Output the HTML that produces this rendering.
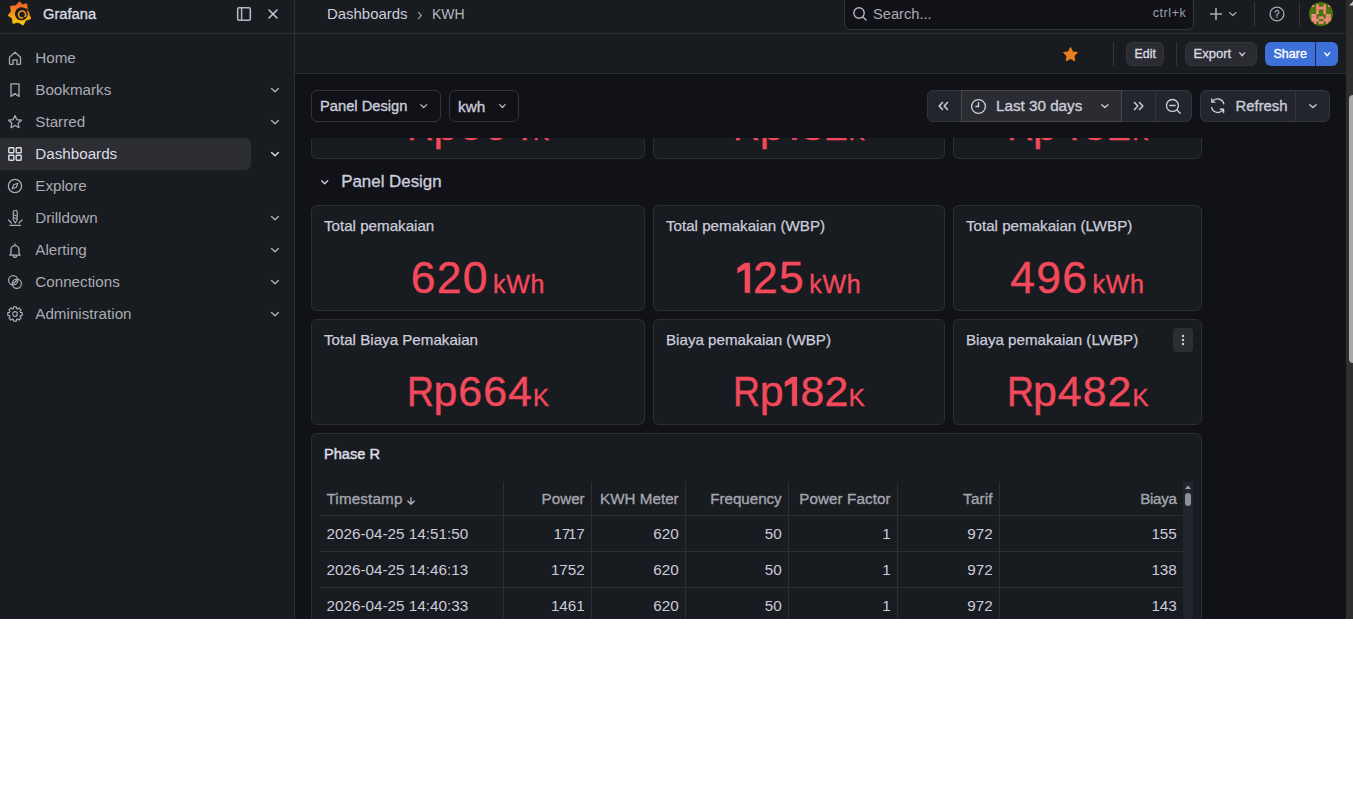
<!DOCTYPE html>
<html><head><meta charset="utf-8">
<style>
*{box-sizing:border-box;margin:0;padding:0}
html,body{width:1353px;height:788px;background:#fff;overflow:hidden;font-family:"Liberation Sans",sans-serif}
#app{position:absolute;left:0;top:0;width:1353px;height:619px;background:#111217;overflow:hidden}
.abs{position:absolute}
.t{position:absolute;white-space:nowrap;line-height:1}
.med{-webkit-text-stroke:0.35px currentColor}
#side{position:absolute;left:0;top:0;width:295px;height:619px;background:#181b1f;border-right:1px solid #2c2e34;z-index:3}
#sidehead{position:absolute;left:0;top:0;width:294px;height:34px;border-bottom:1px solid #2c2e34}
.nav{position:absolute;left:0;width:294px;height:32px;color:#a9abb6;font-size:15.2px}
.nav.active{color:#dcdde6}
.nav .bg{position:absolute;left:0;top:0;width:251px;height:32px;background:#2c2e34;border-radius:0 6px 6px 0}
.nav svg.ic{position:absolute;left:7px;top:8px;width:16px;height:16px}
.nav .lbl{position:absolute;left:35.3px;top:7.9px;line-height:1;white-space:nowrap}
.nav svg.chev{position:absolute;left:269px;top:11px;width:12px;height:10px}
#top{position:absolute;left:295px;top:0;width:1051px;height:34px;background:#181b1f;border-bottom:1px solid #2c2e34;z-index:2}
#tool{position:absolute;left:295px;top:34px;width:1051px;height:40px;background:#181b1f;border-bottom:1px solid #2c2e34;z-index:2}
#canvas{position:absolute;left:0;top:0;width:1353px;height:619px}
#varbar{position:absolute;left:295px;top:74px;width:1051px;height:64px;background:#111217}
#vsb{position:absolute;left:1346px;top:0;width:7px;height:619px;background:#2e2e2e;z-index:5;overflow:hidden}
.btn{background:#2a2c31;border:1px solid #34363c;border-radius:6px}
.sel{background:#111217;border:1px solid #34363c;border-radius:6px}
.grp{background:#22252b;border:1px solid #34363c;border-radius:6px}
.panel{position:absolute;background:#181b1f;border:1px solid #2c2e34;border-radius:6px;overflow:hidden}
.ptitle{position:absolute;left:12px;top:12px;font-size:15.15px;color:#ccccdc;line-height:1;white-space:nowrap;-webkit-text-stroke:0.25px currentColor}
.val{position:absolute;left:0;width:100%;text-align:center;color:#f2495c;white-space:nowrap;line-height:1;-webkit-text-stroke:.4px #f2495c}
.hd{color:#a3a5af}
.cell{font-size:15.28px;color:#ccccdc}

</style></head><body>

<div id="app">
 <div id="side">
  <div id="sidehead">
   <svg class="abs" style="left:4px;top:0px" width="30" height="28" viewBox="0 0 30 28">
    <defs><linearGradient id="lg" x1="0" y1="0" x2="0" y2="1"><stop offset="0" stop-color="#f0582a"/><stop offset="1" stop-color="#fcd10a"/></linearGradient></defs>
    <path fill="url(#lg)" stroke="url(#lg)" stroke-width="0.6" stroke-linejoin="round" d="M25.20 13.60 25.19 13.92 25.18 14.25 25.15 14.57 25.30 14.92 25.48 15.29 25.68 15.68 25.89 16.09 26.09 16.52 26.28 16.97 26.46 17.44 26.64 17.94 26.79 18.45 26.62 18.83 26.12 19.04 25.63 19.22 25.15 19.38 24.68 19.53 24.23 19.65 23.78 19.76 23.35 19.86 22.95 19.95 22.59 20.06 22.36 20.29 22.12 20.51 21.88 20.72 21.63 20.93 21.37 21.12 21.15 21.38 20.99 21.75 20.83 22.14 20.66 22.56 20.48 22.99 20.27 23.42 20.05 23.87 19.80 24.32 19.53 24.78 19.24 25.23 18.74 25.00 18.27 24.76 17.82 24.51 17.40 24.25 16.99 23.99 16.61 23.72 16.24 23.46 15.90 23.21 15.57 22.98 15.25 22.88 14.93 22.85 14.61 22.81 14.29 22.76 13.97 22.70 13.65 22.62 13.34 22.54 13.00 22.52 12.61 22.63 12.20 22.75 11.77 22.87 11.32 22.99 10.85 23.09 10.36 23.19 9.85 23.27 9.33 23.34 8.79 23.39 8.67 22.86 8.57 22.34 8.49 21.83 8.43 21.34 8.39 20.85 8.36 20.39 8.34 19.94 8.33 19.51 8.31 19.11 8.19 18.80 8.01 18.53 7.85 18.25 7.69 17.97 7.37 17.76 7.01 17.56 6.63 17.35 6.23 17.12 5.82 16.87 5.41 16.61 4.99 16.32 4.57 16.01 4.16 15.67 4.09 15.26 4.39 14.81 4.69 14.38 4.99 13.98 5.30 13.60 5.61 13.24 5.92 12.90 6.22 12.58 6.50 12.28 6.74 11.99 6.80 11.67 6.88 11.35 6.96 11.04 7.06 10.73 7.08 10.39 6.99 10.00 6.89 9.59 6.78 9.15 6.68 8.70 6.59 8.22 6.51 7.73 6.44 7.22 6.39 6.69 6.37 6.15 6.90 6.05 7.42 5.97 7.93 5.91 8.43 5.86 8.91 5.84 9.38 5.83 9.83 5.83 10.25 5.83 10.65 5.82 10.97 5.71 11.25 5.55 11.53 5.39 11.82 5.24 12.12 5.10 12.42 4.98 12.69 4.78 12.93 4.46 13.18 4.12 13.45 3.76 13.73 3.39 14.03 3.01 14.36 2.63 14.71 2.25 15.08 1.88 15.48 1.51 15.90 1.85 16.30 2.20 16.67 2.55 17.02 2.91 17.35 3.26 17.66 3.61 17.95 3.95 18.22 4.28 18.49 4.58 18.83 4.58 19.23 4.46 19.65 4.33 20.09 4.20 20.55 4.08 21.02 3.96 21.52 3.87 22.04 3.78 22.57 3.71 22.91 3.95 23.03 4.48 23.13 4.99 23.20 5.49 23.26 5.98 23.30 6.45 23.33 6.91 23.35 7.34 23.38 7.76 23.42 8.13 23.61 8.40 23.79 8.67 23.95 8.95 24.11 9.23 24.26 9.52 24.40 9.82 24.52 10.12 24.64 10.42 24.74 10.73 24.84 11.04 24.92 11.35 25.00 11.67 25.06 11.99 25.11 12.31 25.15 12.63 25.18 12.95 25.19 13.28z"/>
    <circle cx="17.4" cy="13.8" r="6.5" fill="#181b1f"/>
    <path d="M21.5 8.6Q25 9.6 26.2 12.6" fill="none" stroke="#181b1f" stroke-width="1.5"/>
    <circle cx="18.1" cy="14.6" r="3.6" fill="none" stroke="#f7921c" stroke-width="1.7"/>
    <path d="M18.6 18.3 21.4 17.3" stroke="#181b1f" stroke-width="1.3"/>
   </svg>
   <span class="t med" style="left:43px;top:6.8px;font-size:14.7px;color:#d8d9e3" id="gtext">Grafana</span>
   <svg class="abs" style="left:236px;top:6px" width="16" height="16" viewBox="0 0 16 16"><rect x="1.7" y="1.7" width="12.6" height="12.6" rx="1.2" fill="none" stroke="#b4b6c0" stroke-width="1.6"/><path d="M5.6 1.7v12.6" stroke="#b4b6c0" stroke-width="1.5"/></svg>
   <svg class="abs" style="left:267px;top:8px" width="12" height="12" viewBox="0 0 12 12"><path d="M2 2l8 8M10 2l-8 8" stroke="#ccccdc" stroke-width="1.5" stroke-linecap="round"/></svg>
  </div>
  <div class="nav" style="top:42px"><svg class="ic" viewBox="0 0 16 16"><path d="M2.5 7.2 8 2.3l5.5 4.9v6.2a1 1 0 0 1-1 1H10V9.8H6v4.6H3.5a1 1 0 0 1-1-1z" fill="none" stroke="currentColor" stroke-width="1.3" stroke-linejoin="round"/></svg><span class="lbl">Home</span></div>
<div class="nav" style="top:74px"><svg class="ic" viewBox="0 0 16 16"><path d="M4 1.8h8v12.6L8 11.6l-4 2.8z" fill="none" stroke="currentColor" stroke-width="1.3" stroke-linejoin="round"/></svg><span class="lbl">Bookmarks</span><svg class="chev" viewBox="0 0 12 10"><path d="M2.6 3.4 6 6.8l3.4-3.4" fill="none" stroke="currentColor" stroke-width="1.4" stroke-linecap="round" stroke-linejoin="round"/></svg></div>
<div class="nav" style="top:106px"><svg class="ic" viewBox="0 0 16 16"><path d="M8 1.6l1.95 4.1 4.45.55-3.3 3.05.87 4.4L8 11.5l-3.97 2.2.87-4.4L1.6 6.25l4.45-.55z" fill="none" stroke="currentColor" stroke-width="1.3" stroke-linejoin="round"/></svg><span class="lbl">Starred</span><svg class="chev" viewBox="0 0 12 10"><path d="M2.6 3.4 6 6.8l3.4-3.4" fill="none" stroke="currentColor" stroke-width="1.4" stroke-linecap="round" stroke-linejoin="round"/></svg></div>
<div class="nav active" style="top:138px"><div class="bg"></div><svg class="ic" viewBox="0 0 16 16"><rect x="1.8" y="1.8" width="5" height="5" rx=".6" fill="none" stroke="currentColor" stroke-width="1.4"/><rect x="9.2" y="1.8" width="5" height="5" rx=".6" fill="none" stroke="currentColor" stroke-width="1.4"/><rect x="1.8" y="9.2" width="5" height="5" rx=".6" fill="none" stroke="currentColor" stroke-width="1.4"/><rect x="9.2" y="9.2" width="5" height="5" rx=".6" fill="none" stroke="currentColor" stroke-width="1.4"/></svg><span class="lbl">Dashboards</span><svg class="chev" viewBox="0 0 12 10"><path d="M2.6 3.4 6 6.8l3.4-3.4" fill="none" stroke="currentColor" stroke-width="1.4" stroke-linecap="round" stroke-linejoin="round"/></svg></div>
<div class="nav" style="top:170px"><svg class="ic" viewBox="0 0 16 16"><circle cx="8" cy="8" r="6.6" fill="none" stroke="currentColor" stroke-width="1.3"/><path d="M10.8 5.2 9.3 9.3 5.2 10.8 6.7 6.7z" fill="none" stroke="currentColor" stroke-width="1.2" stroke-linejoin="round"/></svg><span class="lbl">Explore</span></div>
<div class="nav" style="top:202px"><svg class="ic" viewBox="0 0 16 16"><path d="M6.3 2.2a1.95 1.95 0 0 1 3.9 0v7.6L8.25 13 6.3 9.8z" fill="none" stroke="currentColor" stroke-width="1.2" stroke-linejoin="round"/><path d="M6.4 4.6l3.7 1.6M6.4 7.4l3.7 1.6" stroke="currentColor" stroke-width="1.1"/><path d="M1.5 10l3 3M15 10l-3 3M3 15.4h10.5" fill="none" stroke="currentColor" stroke-width="1.2" stroke-linecap="round"/></svg><span class="lbl">Drilldown</span><svg class="chev" viewBox="0 0 12 10"><path d="M2.6 3.4 6 6.8l3.4-3.4" fill="none" stroke="currentColor" stroke-width="1.4" stroke-linecap="round" stroke-linejoin="round"/></svg></div>
<div class="nav" style="top:234px"><svg class="ic" viewBox="0 0 16 16"><path d="M8 1.8v1.2M4 11.8V7.6a4 4 0 0 1 8 0v4.2l1.2 1.3H2.8zM6.3 14.2a1.8 1.8 0 0 0 3.4 0" fill="none" stroke="currentColor" stroke-width="1.3" stroke-linejoin="round" stroke-linecap="round"/></svg><span class="lbl">Alerting</span><svg class="chev" viewBox="0 0 12 10"><path d="M2.6 3.4 6 6.8l3.4-3.4" fill="none" stroke="currentColor" stroke-width="1.4" stroke-linecap="round" stroke-linejoin="round"/></svg></div>
<div class="nav" style="top:266px"><svg class="ic" viewBox="0 0 16 16"><circle cx="6.2" cy="6.2" r="4.6" fill="none" stroke="currentColor" stroke-width="1.2"/><circle cx="9.8" cy="9.8" r="4.6" fill="none" stroke="currentColor" stroke-width="1.2"/><path d="M6.5 9.5l3-3M5.6 8.2l1.2 1.2M9.2 5.6l1.2 1.2" fill="none" stroke="currentColor" stroke-width="1.1"/></svg><span class="lbl">Connections</span><svg class="chev" viewBox="0 0 12 10"><path d="M2.6 3.4 6 6.8l3.4-3.4" fill="none" stroke="currentColor" stroke-width="1.4" stroke-linecap="round" stroke-linejoin="round"/></svg></div>
<div class="nav" style="top:298px"><svg class="ic" viewBox="0 0 16 16"><path d="M6.36 2.64 6.61 0.83 9.39 0.83 9.64 2.64 10.63 3.06 12.08 1.95 14.05 3.92 12.94 5.37 13.36 6.36 15.17 6.61 15.17 9.39 13.36 9.64 12.94 10.63 14.05 12.08 12.08 14.05 10.63 12.94 9.64 13.36 9.39 15.17 6.61 15.17 6.36 13.36 5.37 12.94 3.92 14.05 1.95 12.08 3.06 10.63 2.64 9.64 0.83 9.39 0.83 6.61 2.64 6.36 3.06 5.37 1.95 3.92 3.92 1.95 5.37 3.06z" fill="none" stroke="currentColor" stroke-width="1.2" stroke-linejoin="round"/><circle cx="8" cy="8" r="2.3" fill="none" stroke="currentColor" stroke-width="1.2"/></svg><span class="lbl">Administration</span><svg class="chev" viewBox="0 0 12 10"><path d="M2.6 3.4 6 6.8l3.4-3.4" fill="none" stroke="currentColor" stroke-width="1.4" stroke-linecap="round" stroke-linejoin="round"/></svg></div>
 </div>

 <div id="top">
  <span class="t" style="left:32px;top:7px;font-size:14.95px;color:#ccccdc">Dashboards</span>
  <svg class="abs" style="left:122px;top:11px" width="6" height="9" viewBox="0 0 6 9"><path d="M1.5 1.3 4.3 4.5 1.5 7.7" fill="none" stroke="#9d9fa8" stroke-width="1.2" stroke-linecap="round"/></svg>
  <span class="t" style="left:137px;top:7px;font-size:14px;color:#b4b6c0">KWH</span>
  <div class="abs" style="left:549px;top:-3px;width:350px;height:33px;background:#111217;border:1px solid #34363c;border-radius:6px"></div>
  <svg class="abs" style="left:557px;top:6px" width="16" height="16" viewBox="0 0 16 16"><circle cx="7" cy="7" r="5.2" fill="none" stroke="#b4b6c0" stroke-width="1.4"/><path d="M10.8 10.8l3.2 3.2" stroke="#b4b6c0" stroke-width="1.4" stroke-linecap="round"/></svg>
  <span class="t" style="left:578px;top:6.5px;font-size:14.67px;color:#a8aab4">Search...</span>
  <span class="t" style="left:857.8px;top:7.1px;font-size:12.5px;letter-spacing:.55px;color:#9d9fa8">ctrl+k</span>
  <svg class="abs" style="left:914px;top:7px" width="14" height="14" viewBox="0 0 14 14"><path d="M7 1v12M1 7h12" stroke="#a8aab4" stroke-width="1.6"/></svg>
  <svg class="abs" style="left:934.2px;top:12px;overflow:visible" width="7.6" height="4.2" viewBox="0 0 7.6 4.2"><path d="M0.65 0.65 3.8 3.5500000000000003 6.949999999999999 0.65" fill="none" stroke="#a8aab4" stroke-width="1.3" stroke-linecap="round" stroke-linejoin="round"/></svg>
  <div class="abs" style="left:959px;top:2px;width:1px;height:24px;background:#34363c"></div>
  <svg class="abs" style="left:974px;top:6px" width="16" height="16" viewBox="0 0 16 16"><circle cx="8" cy="8" r="6.9" fill="none" stroke="#a8aab4" stroke-width="1.3"/><path d="M6.2 6.3a1.8 1.8 0 1 1 2.6 1.6c-.5.3-.8.6-.8 1.2v.5" fill="none" stroke="#a8aab4" stroke-width="1.2" stroke-linecap="round"/><circle cx="8" cy="11.3" r=".75" fill="#a8aab4"/></svg>
  <div class="abs" style="left:1004px;top:2px;width:1px;height:24px;background:#34363c"></div>
  <svg class="abs" style="left:1014px;top:2px" width="24" height="24" viewBox="0 0 24 24">
   <defs><clipPath id="av"><circle cx="12" cy="12" r="12"/></clipPath></defs>
   <g clip-path="url(#av)"><rect width="24" height="24" fill="#4d740c"/><g fill="#f28b7f"><rect x="2.4" y="2.4" width="2.6" height="2.6"/><rect x="19.2" y="2.4" width="2.6" height="2.6"/><rect x="7.2" y="2.4" width="2.6" height="2.6"/><rect x="7.2" y="4.8" width="2.6" height="2.6"/><rect x="7.2" y="7.2" width="2.6" height="2.6"/><rect x="7.2" y="9.6" width="2.6" height="2.6"/><rect x="14.4" y="2.4" width="2.6" height="2.6"/><rect x="14.4" y="4.8" width="2.6" height="2.6"/><rect x="14.4" y="7.2" width="2.6" height="2.6"/><rect x="14.4" y="9.6" width="2.6" height="2.6"/><rect x="9.6" y="4.8" width="2.6" height="2.6"/><rect x="12.0" y="4.8" width="2.6" height="2.6"/><rect x="2.4" y="12.0" width="2.6" height="2.6"/><rect x="2.4" y="14.4" width="2.6" height="2.6"/><rect x="2.4" y="16.8" width="2.6" height="2.6"/><rect x="4.8" y="12.0" width="2.6" height="2.6"/><rect x="4.8" y="14.4" width="2.6" height="2.6"/><rect x="4.8" y="16.8" width="2.6" height="2.6"/><rect x="7.2" y="16.8" width="2.6" height="2.6"/><rect x="4.8" y="19.2" width="2.6" height="2.6"/><rect x="16.8" y="12.0" width="2.6" height="2.6"/><rect x="16.8" y="14.4" width="2.6" height="2.6"/><rect x="16.8" y="16.8" width="2.6" height="2.6"/><rect x="19.2" y="12.0" width="2.6" height="2.6"/><rect x="19.2" y="14.4" width="2.6" height="2.6"/><rect x="19.2" y="16.8" width="2.6" height="2.6"/><rect x="14.4" y="16.8" width="2.6" height="2.6"/><rect x="16.8" y="19.2" width="2.6" height="2.6"/><rect x="9.6" y="14.4" width="2.6" height="2.6"/><rect x="12.0" y="14.4" width="2.6" height="2.6"/><rect x="9.6" y="19.2" width="2.6" height="2.6"/><rect x="12.0" y="19.2" width="2.6" height="2.6"/></g></g>
  </svg>
 </div>

 <div id="tool">
  <svg class="abs" style="left:767px;top:12px" width="17" height="17" viewBox="0 0 16 16"><path d="M8 1.3l2.05 4.2 4.6.65-3.33 3.25.8 4.6L8 11.85 3.88 14l.8-4.6L1.35 6.15l4.6-.65z" fill="#ec7f1c" stroke="#ec7f1c" stroke-width=".8" stroke-linejoin="round"/></svg>
  <div class="abs" style="left:818px;top:8px;width:1px;height:24px;background:#34363c"></div>
  <div class="btn abs" style="left:831px;top:8px;width:38px;height:24px"></div>
  <span class="t med" style="left:839.5px;top:14px;font-size:12.4px;color:#d8d9e3">Edit</span>
  <div class="abs" style="left:881px;top:8px;width:1px;height:24px;background:#34363c"></div>
  <div class="btn abs" style="left:890px;top:8px;width:72px;height:24px"></div>
  <span class="t med" style="left:898.5px;top:13.4px;font-size:13px;color:#d8d9e3">Export</span>
  <svg class="abs" style="left:944px;top:17.7px;overflow:visible" width="6.4" height="4.4" viewBox="0 0 6.4 4.4"><path d="M0.65 0.65 3.2 3.7500000000000004 5.75 0.65" fill="none" stroke="#ccccdc" stroke-width="1.3" stroke-linecap="round" stroke-linejoin="round"/></svg>
  <div class="abs" style="left:970px;top:8px;width:73px;height:24px;background:#3d71d9;border-radius:6px"></div>
  <div class="abs" style="left:1020px;top:8px;width:1px;height:24px;background:#1f2a4a"></div>
  <span class="t med" style="left:978.5px;top:14.1px;font-size:12.5px;color:#ffffff">Share</span>
  <svg class="abs" style="left:1028.8px;top:17.7px;overflow:visible" width="6.4" height="4.4" viewBox="0 0 6.4 4.4"><path d="M0.65 0.65 3.2 3.7500000000000004 5.75 0.65" fill="none" stroke="#ffffff" stroke-width="1.3" stroke-linecap="round" stroke-linejoin="round"/></svg>
 </div>

 <div id="canvas">
  <!-- scrolled row above -->
  <div class="panel" style="left:311px;top:53px;width:334px;height:106px"><div class="ptitle">Total Biaya Pemakaian</div><div class="val" style="top:49.55px;font-size:42.9px;letter-spacing:1px"><span style="display:inline-block;transform:scaleX(.87);transform-origin:0 0;letter-spacing:0;margin-right:-4.5px">R</span>p664<span style="font-size:24px;margin-left:0px;letter-spacing:0">K</span></div></div>
  <div class="panel" style="left:653px;top:53px;width:292px;height:106px"><div class="ptitle">Biaya pemakaian (WBP)</div><div class="val" style="top:49.55px;font-size:42.9px;letter-spacing:.15px"><span style="display:inline-block;transform:scaleX(.87);transform-origin:0 0;letter-spacing:0;margin-right:-4.5px">R</span>p<svg width="16.77" height="28.73" viewBox="0 0 16.77 28.73" style="vertical-align:baseline;overflow:visible"><path d="M12.95 0.00 12.95 28.73 8.13 28.73 8.13 6.07 1.00 9.64 1.00 4.72 7.94 0.00z" fill="#f2495c" stroke="#f2495c" stroke-width=".4" stroke-linejoin="round"/></svg>82<span style="font-size:24px;margin-left:0px;letter-spacing:0">K</span></div></div>
  <div class="panel" style="left:953px;top:53px;width:249px;height:106px"><div class="ptitle">Biaya pemakaian (LWBP)</div><div class="val" style="top:49.55px;font-size:42.9px;letter-spacing:1px"><span style="display:inline-block;transform:scaleX(.87);transform-origin:0 0;letter-spacing:0;margin-right:-4.5px">R</span>p482<span style="font-size:24px;margin-left:0px;letter-spacing:0">K</span></div></div>
  <div id="varbar"></div>
  <div class="sel abs" style="left:311px;top:90px;width:130px;height:32px"></div>
  <span class="t med" style="left:320px;top:98.9px;font-size:14.69px;color:#ccccdc">Panel Design</span>
  <svg class="abs" style="left:420.4px;top:103.8px;overflow:visible" width="7.4" height="4.2" viewBox="0 0 7.4 4.2"><path d="M0.65 0.65 3.7 3.5500000000000003 6.75 0.65" fill="none" stroke="#b4b6c0" stroke-width="1.3" stroke-linecap="round" stroke-linejoin="round"/></svg>
  <div class="sel abs" style="left:449px;top:90px;width:70px;height:32px"></div>
  <span class="t med" style="left:458px;top:98.6px;font-size:15.35px;color:#ccccdc">kwh</span>
  <svg class="abs" style="left:499px;top:103.8px;overflow:visible" width="6.8" height="4.2" viewBox="0 0 6.8 4.2"><path d="M0.65 0.65 3.4 3.5500000000000003 6.1499999999999995 0.65" fill="none" stroke="#b4b6c0" stroke-width="1.3" stroke-linecap="round" stroke-linejoin="round"/></svg>

  <div class="abs grp" style="left:927px;top:90px;width:265px;height:32px"></div>
  <div class="abs" style="left:961px;top:90px;width:161px;height:32px;background:#2a2c32;border:1px solid #45474d"></div>
  <div class="abs" style="left:1155px;top:91px;width:1px;height:30px;background:#34363c"></div>
  <svg class="abs" style="left:937px;top:100px" width="13" height="12" viewBox="0 0 13 12"><path d="M5.5 2.5 2.2 6l3.3 3.5M10.5 2.5 7.2 6l3.3 3.5" fill="none" stroke="#ccccdc" stroke-width="1.6" stroke-linecap="round" stroke-linejoin="round"/></svg>
  <svg class="abs" style="left:970px;top:98px" width="17" height="17" viewBox="0 0 16 16"><circle cx="8" cy="8" r="6.5" fill="none" stroke="#ccccdc" stroke-width="1.3"/><path d="M8 4.3V8H5.6" fill="none" stroke="#ccccdc" stroke-width="1.3" stroke-linecap="round"/></svg>
  <span class="t med" style="left:996px;top:98.2px;font-size:15.22px;color:#ccccdc">Last 30 days</span>
  <svg class="abs" style="left:1101px;top:103.8px;overflow:visible" width="7.7" height="4.2" viewBox="0 0 7.7 4.2"><path d="M0.65 0.65 3.85 3.5500000000000003 7.05 0.65" fill="none" stroke="#ccccdc" stroke-width="1.3" stroke-linecap="round" stroke-linejoin="round"/></svg>
  <svg class="abs" style="left:1132px;top:100px" width="13" height="12" viewBox="0 0 13 12"><path d="M2.5 2.5 5.8 6 2.5 9.5M7.5 2.5 10.8 6 7.5 9.5" fill="none" stroke="#ccccdc" stroke-width="1.6" stroke-linecap="round" stroke-linejoin="round"/></svg>
  <svg class="abs" style="left:1165px;top:98px" width="17" height="17" viewBox="0 0 16 16"><circle cx="7" cy="7" r="5.6" fill="none" stroke="#ccccdc" stroke-width="1.3"/><path d="M4.5 7h5M11 11l3.3 3.3" stroke="#ccccdc" stroke-width="1.3" stroke-linecap="round"/></svg>

  <div class="abs grp" style="left:1200px;top:90px;width:130px;height:32px"></div>
  <div class="abs" style="left:1295px;top:91px;width:1px;height:30px;background:#34363c"></div>
  <svg class="abs" style="left:1209.3px;top:97.3px" width="17.4" height="17.4" viewBox="0 0 16 16"><path d="M13.6 6.2A6 6 0 0 0 3 4.2M2.4 9.8A6 6 0 0 0 13 11.8" fill="none" stroke="#ccccdc" stroke-width="1.3" stroke-linecap="round"/><path d="M2.6 1.8v2.9h2.9M13.4 14.2v-2.9h-2.9" fill="none" stroke="#ccccdc" stroke-width="1.3" stroke-linecap="round" stroke-linejoin="round"/></svg>
  <span class="t med" style="left:1235.5px;top:98.9px;font-size:14.88px;color:#ccccdc">Refresh</span>
  <svg class="abs" style="left:1309.2px;top:103.8px;overflow:visible" width="7.8" height="4.2" viewBox="0 0 7.8 4.2"><path d="M0.65 0.65 3.9 3.5500000000000003 7.1499999999999995 0.65" fill="none" stroke="#ccccdc" stroke-width="1.3" stroke-linecap="round" stroke-linejoin="round"/></svg>

  <!-- row title -->
  <svg class="abs" style="left:321.2px;top:180px;overflow:visible" width="7.4" height="4.5" viewBox="0 0 7.4 4.5"><path d="M0.7 0.7 3.7 3.8 6.7 0.7" fill="none" stroke="#ccccdc" stroke-width="1.4" stroke-linecap="round" stroke-linejoin="round"/></svg>
  <span class="t med" style="left:341.2px;top:173.7px;font-size:16.9px;color:#ccccdc">Panel Design</span>

  <div class="panel" style="left:311px;top:205px;width:334px;height:106px"><div class="ptitle">Total pemakaian</div><div class="val" style="top:49.9px;font-size:44.5px;letter-spacing:1.25px">620<span style="font-size:25px;letter-spacing:.7px;margin-left:-3.3px"> kWh</span></div></div>
  <div class="panel" style="left:653px;top:205px;width:292px;height:106px"><div class="ptitle">Total pemakaian (WBP)</div><div class="val" style="top:49.9px;font-size:44.5px;letter-spacing:1.25px"><svg width="16.30" height="29.80" viewBox="0 0 16.30 29.80" style="vertical-align:baseline;overflow:visible"><path d="M12.90 0.00 12.90 29.80 7.90 29.80 7.90 6.30 0.50 10.00 0.50 4.90 7.70 0.00z" fill="#f2495c" stroke="#f2495c" stroke-width=".4" stroke-linejoin="round"/></svg>25<span style="font-size:25px;letter-spacing:.7px;margin-left:-3.3px"> kWh</span></div></div>
  <div class="panel" style="left:953px;top:205px;width:249px;height:106px"><div class="ptitle">Total pemakaian (LWBP)</div><div class="val" style="top:49.9px;font-size:44.5px;letter-spacing:1.25px">496<span style="font-size:25px;letter-spacing:.7px;margin-left:-3.3px"> kWh</span></div></div>
  <div class="panel" style="left:311px;top:319px;width:334px;height:106px"><div class="ptitle">Total Biaya Pemakaian</div><div class="val" style="top:49.55px;font-size:42.9px;letter-spacing:1px"><span style="display:inline-block;transform:scaleX(.87);transform-origin:0 0;letter-spacing:0;margin-right:-4.5px">R</span>p664<span style="font-size:24px;margin-left:0px;letter-spacing:0">K</span></div></div>
  <div class="panel" style="left:653px;top:319px;width:292px;height:106px"><div class="ptitle">Biaya pemakaian (WBP)</div><div class="val" style="top:49.55px;font-size:42.9px;letter-spacing:.15px"><span style="display:inline-block;transform:scaleX(.87);transform-origin:0 0;letter-spacing:0;margin-right:-4.5px">R</span>p<svg width="16.77" height="28.73" viewBox="0 0 16.77 28.73" style="vertical-align:baseline;overflow:visible"><path d="M12.95 0.00 12.95 28.73 8.13 28.73 8.13 6.07 1.00 9.64 1.00 4.72 7.94 0.00z" fill="#f2495c" stroke="#f2495c" stroke-width=".4" stroke-linejoin="round"/></svg>82<span style="font-size:24px;margin-left:0px;letter-spacing:0">K</span></div></div>
  <div class="panel" style="left:953px;top:319px;width:249px;height:106px"><div class="ptitle">Biaya pemakaian (LWBP)</div><div class="abs" style="right:8px;top:8px;width:20px;height:24px;background:#2c2e34;border-radius:4px"><svg class="abs" style="left:8px;top:6px" width="4" height="12" viewBox="0 0 4 12"><circle cx="2" cy="2" r="1.2" fill="#ccccdc"/><circle cx="2" cy="6" r="1.2" fill="#ccccdc"/><circle cx="2" cy="10" r="1.2" fill="#ccccdc"/></svg></div><div class="val" style="top:49.55px;font-size:42.9px;letter-spacing:1px"><span style="display:inline-block;transform:scaleX(.87);transform-origin:0 0;letter-spacing:0;margin-right:-4.5px">R</span>p482<span style="font-size:24px;margin-left:0px;letter-spacing:0">K</span></div></div>

  <div class="panel" style="left:311px;top:433px;width:891px;height:220px"><div class="ptitle" style="top:12.6px;font-size:14.6px;color:#dcdde6;-webkit-text-stroke:.45px #dcdde6">Phase R</div></div><span class="t med hd" style="left:326.5px;top:490.8px;font-size:15.2px;letter-spacing:0.16px">Timestamp</span><svg class="abs" style="left:406px;top:497px" width="10" height="8" viewBox="0 0 10 8"><path d="M5 .6v6.6M1.8 4 5 7.2 8.2 4" fill="none" stroke="#b4b6c0" stroke-width="1.3" stroke-linecap="round" stroke-linejoin="round"/></svg><span class="t med hd" style="right:768.3px;top:490.8px;font-size:15.2px;letter-spacing:0.03px">Power</span><span class="t med hd" style="right:674.3px;top:490.8px;font-size:15.2px;letter-spacing:0.02px">KWH Meter</span><span class="t med hd" style="right:571.3px;top:490.8px;font-size:15.2px;letter-spacing:-0.03px">Frequency</span><span class="t med hd" style="right:462.29999999999995px;top:490.8px;font-size:15.2px;letter-spacing:0.1px">Power Factor</span><span class="t med hd" style="right:360.29999999999995px;top:490.8px;font-size:15.2px;letter-spacing:0.18px">Tarif</span><span class="t med hd" style="right:176.29999999999995px;top:490.8px;font-size:15.2px;letter-spacing:-0.3px">Biaya</span><div class="abs" style="left:503px;top:482px;width:1px;height:140px;background:#2c2e34"></div><div class="abs" style="left:591px;top:482px;width:1px;height:140px;background:#2c2e34"></div><div class="abs" style="left:685px;top:482px;width:1px;height:140px;background:#2c2e34"></div><div class="abs" style="left:788px;top:482px;width:1px;height:140px;background:#2c2e34"></div><div class="abs" style="left:897px;top:482px;width:1px;height:140px;background:#2c2e34"></div><div class="abs" style="left:999px;top:482px;width:1px;height:140px;background:#2c2e34"></div><div class="abs" style="left:320px;top:515px;width:863px;height:1px;background:#2c2e34"></div><div class="abs" style="left:320px;top:551px;width:863px;height:1px;background:#2c2e34"></div><div class="abs" style="left:320px;top:587px;width:863px;height:1px;background:#2c2e34"></div><span class="t cell" style="left:326.5px;top:525.9px">2026-04-25 14:51:50</span><span class="t cell" style="right:768.3px;top:525.9px"><span style="margin-left:-2.2px;margin-right:-.3px">1</span>7<span style="margin-left:-2.2px;margin-right:-.3px">1</span>7</span><span class="t cell" style="right:674.3px;top:525.9px">620</span><span class="t cell" style="right:571.3px;top:525.9px">50</span><span class="t cell" style="right:462.29999999999995px;top:525.9px">1</span><span class="t cell" style="right:360.29999999999995px;top:525.9px">972</span><span class="t cell" style="right:176.29999999999995px;top:525.9px"><span style="margin-left:-2.2px;margin-right:-.3px">1</span>55</span><span class="t cell" style="left:326.5px;top:561.9px">2026-04-25 14:46:13</span><span class="t cell" style="right:768.3px;top:561.9px"><span style="margin-left:-2.2px;margin-right:-.3px">1</span>752</span><span class="t cell" style="right:674.3px;top:561.9px">620</span><span class="t cell" style="right:571.3px;top:561.9px">50</span><span class="t cell" style="right:462.29999999999995px;top:561.9px">1</span><span class="t cell" style="right:360.29999999999995px;top:561.9px">972</span><span class="t cell" style="right:176.29999999999995px;top:561.9px"><span style="margin-left:-2.2px;margin-right:-.3px">1</span>38</span><span class="t cell" style="left:326.5px;top:597.9px">2026-04-25 14:40:33</span><span class="t cell" style="right:768.3px;top:597.9px"><span style="margin-left:-2.2px;margin-right:-.3px">1</span>461</span><span class="t cell" style="right:674.3px;top:597.9px">620</span><span class="t cell" style="right:571.3px;top:597.9px">50</span><span class="t cell" style="right:462.29999999999995px;top:597.9px">1</span><span class="t cell" style="right:360.29999999999995px;top:597.9px">972</span><span class="t cell" style="right:176.29999999999995px;top:597.9px"><span style="margin-left:-2.2px;margin-right:-.3px">1</span>43</span><div class="abs" style="left:1183px;top:482px;width:10px;height:140px;background:#22252b"></div><svg class="abs" style="left:1184px;top:484px" width="8" height="6" viewBox="0 0 8 6"><path d="M1 5 4 1.5 7 5z" fill="#9d9fa8"/></svg><div class="abs" style="left:1185px;top:493px;width:6px;height:13px;background:#8e9098;border-radius:3px"></div>
 </div>
 <div id="vsb"><div class="abs" style="left:3px;top:95px;width:8px;height:268px;background:#a9a9a9;border-radius:4px"></div><svg class="abs" style="left:2px;top:0" width="10" height="6" viewBox="0 0 10 6"><path d="M1 5.5 5.5 .8 10 5.5z" fill="#c4c4c4"/></svg></div>
</div>

</body></html>
